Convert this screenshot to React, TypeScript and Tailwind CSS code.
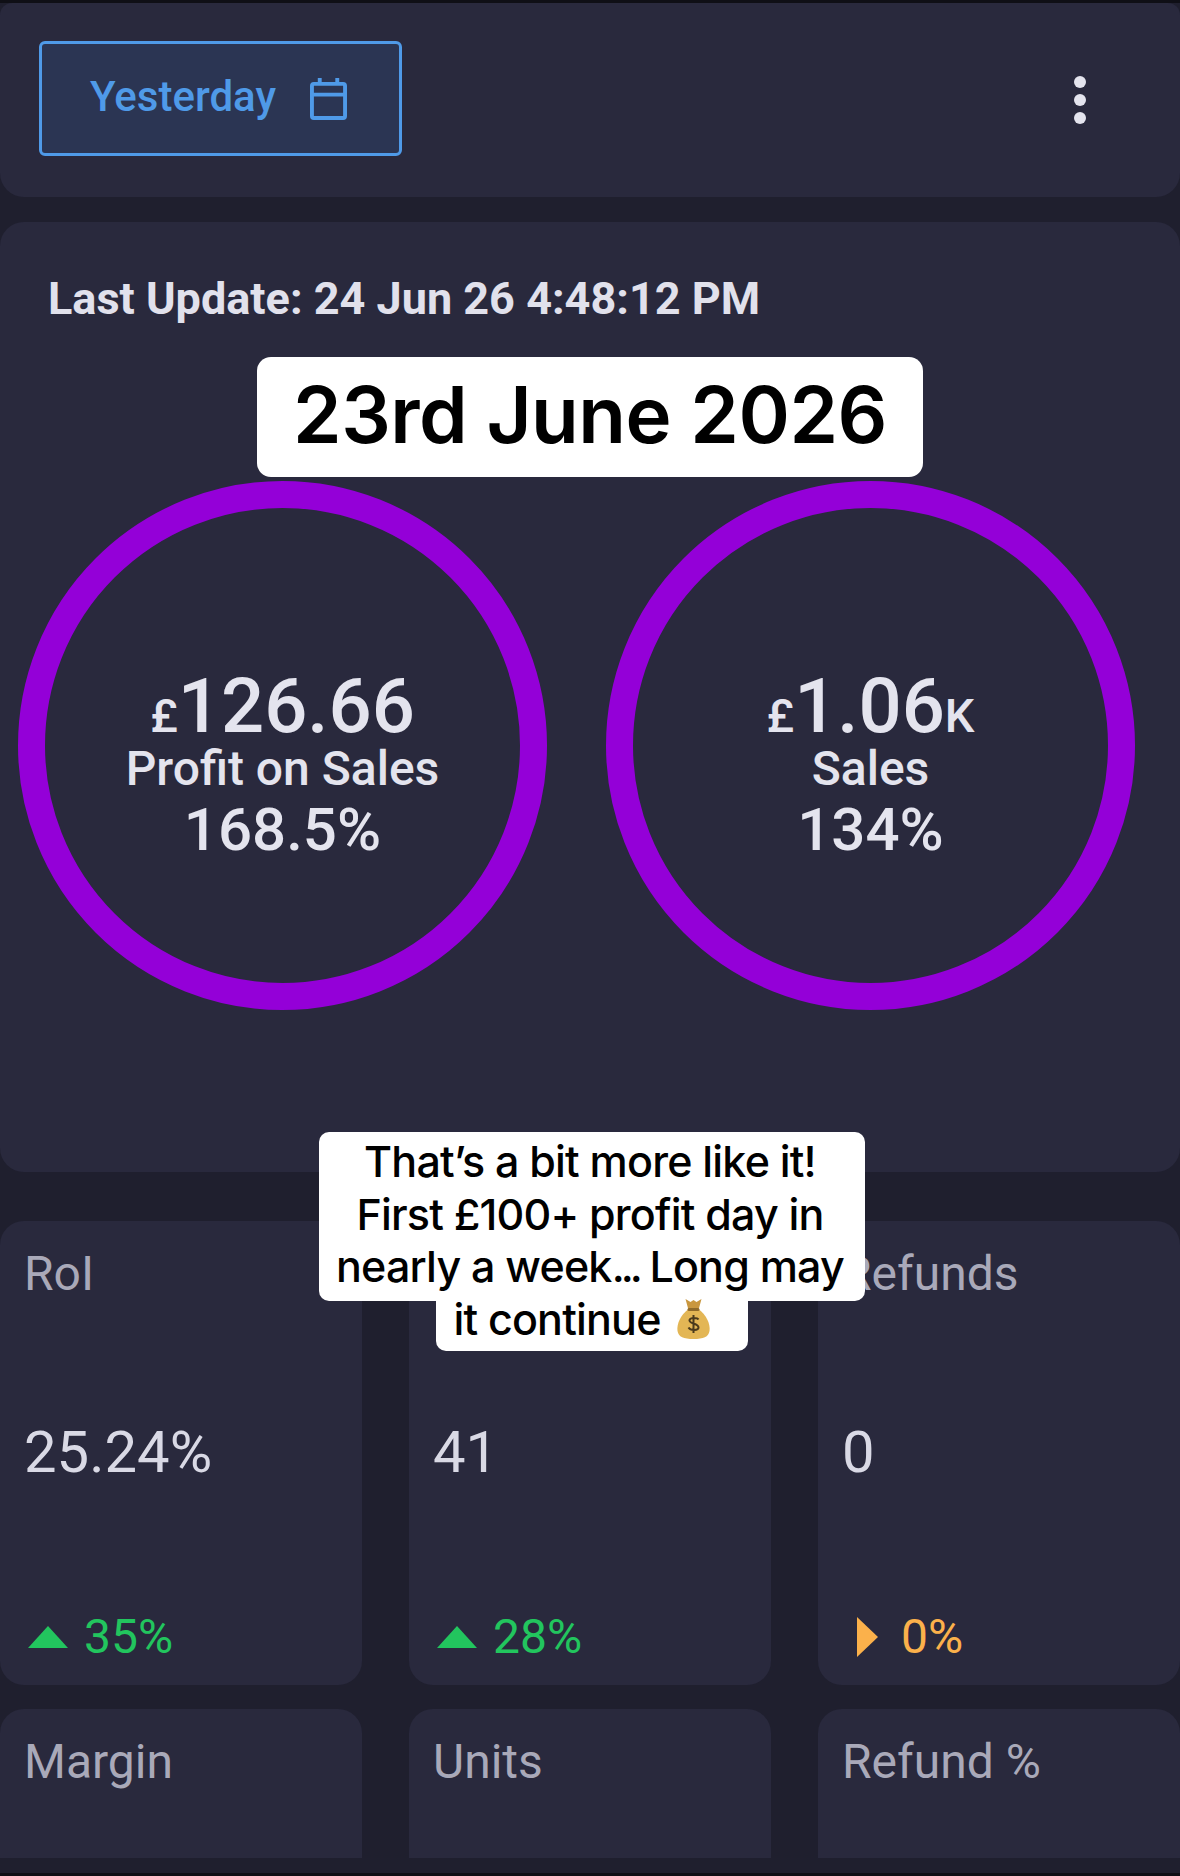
const roboto = "font-['Roboto',sans-serif]";

function CalendarIcon() {
  return (
    <svg className="ml-[1px]" width="37" height="42" viewBox="0 0 38 43" fill="none" stroke="#4f9ae8" strokeWidth="4" strokeLinejoin="round">
      <rect x="2" y="6" width="34" height="35" rx="2" />
      <path d="M2 17h34M10 0v6M28 0v6" />
    </svg>
  );
}

function MoneyBag() {
  return (
    <svg width="35" height="42" viewBox="0 0 34 42">
      <path d="M9 1l5 3 3-2 3 2 5-3-3 11H12z" fill="#c9973f" />
      <path d="M12 11h10c8 6 12 15 11 22-1 6-6 8-16 8S2 39 1 33c-1-7 3-16 11-22z" fill="#e3b655" />
      <rect x="11" y="10" width="12" height="3" rx="1.5" fill="#8f6a2a" />
      <path d="M22 21.5c-1-2-8-2.500-9 .5-1 4 9 3 9 7.500 0 3-8 3.500-10 0M17 17v18" fill="none" stroke="#4a3a1c" strokeWidth="2" />
    </svg>
  );
}

function Gauge({ value, unit, label, pct }: { value: string; unit?: string; label: string; pct: string }) {
  return (
    <div className="w-[529px] h-[529px] rounded-full border-[27px] border-[#9400d8] flex flex-col items-center pt-[161px] text-[#e4e4ee] font-medium">
      <div className="flex items-baseline h-[74px]">
        <span className="text-[47px] leading-none">£</span>
        <span className="text-[76px] leading-[74px]">{value}</span>
        {unit && <span className="text-[47px] leading-none">{unit}</span>}
      </div>
      <div className="text-[48px] leading-[52px]">{label}</div>
      <div className="text-[60px] leading-[70px]">{pct}</div>
    </div>
  );
}

function Trend({ dir, text }: { dir: "up" | "flat"; text: string }) {
  const up = dir === "up";
  return (
    <div className={`flex items-center text-[48px] leading-[54px] ${up ? "text-[#22c55e]" : "text-[#fbb14b]"}`}>
      {up ? (
        <svg className="ml-[28px] mr-[16px]" width="40" height="22" viewBox="0 0 40 22"><path d="M20 0l20 22H0z" fill="#22c55e" /></svg>
      ) : (
        <svg className="ml-[39px] mr-[23px]" width="21" height="40" viewBox="0 0 21 40"><path d="M0 0l21 20L0 40z" fill="#fbb14b" /></svg>
      )}
      {text}
    </div>
  );
}

function Stat({ label, value, dir, text }: { label?: string; value: string; dir: "up" | "flat"; text: string }) {
  return (
    <div className="h-[464px] bg-[#29293d] rounded-[24px] flex flex-col">
      <div className="h-[54px] mt-[26px] pl-[24px] text-[48px] leading-[54px] text-[#a9a9b9]">{label}</div>
      <div className="pl-[24px] mt-[118px] text-[58px] leading-[66px] text-[#d9d9e5]">{value}</div>
      <div className="mt-[125px]"><Trend dir={dir} text={text} /></div>
    </div>
  );
}

export default function App() {
  return (
    <div className={`relative w-[1180px] h-[1876px] overflow-hidden bg-[#1f1f2e] ${roboto}`}>
      <div className="pt-[3px]">
        <div className="h-[194px] bg-[#29293d] rounded-b-[24px] rounded-t-[12px] flex items-center justify-between pl-[39px] pr-[94px]">
          <button className="w-[363px] h-[115px] rounded-[6px] border-[3px] border-[#4f9ae8] bg-[#2b3553] flex items-center pl-[48px] gap-[33px] text-[42px] font-medium text-[#4f9ae8] mt-[-3px]">
            <span className="pb-[4px]">Yesterday</span>
            <CalendarIcon />
          </button>
          <div className="flex flex-col gap-[6px]">
            <span className="w-[12px] h-[12px] rounded-full bg-[#e4e4ee]" />
            <span className="w-[12px] h-[12px] rounded-full bg-[#e4e4ee]" />
            <span className="w-[12px] h-[12px] rounded-full bg-[#e4e4ee]" />
          </div>
        </div>

        <div className="mt-[25px] h-[950px] bg-[#29293d] rounded-[24px] px-[18px]">
          <div className="pl-[30px] pt-[50px] h-[259px] text-[45px] leading-[54px] font-bold text-[#e1e1ec]">
            Last Update: 24 Jun 26 4:48:12 PM
          </div>
          <div className="flex justify-between w-[1117px]">
            <Gauge value="126.66" label="Profit on Sales" pct="168.5%" />
            <Gauge value="1.06" unit="K" label="Sales" pct="134%" />
          </div>
        </div>

        <div className="mt-[49px] grid grid-cols-3 gap-x-[47px] gap-y-[24px]">
          <Stat label="RoI" value="25.24%" dir="up" text="35%" />
          <Stat value="41" dir="up" text="28%" />
          <Stat label="Refunds" value="0" dir="flat" text="0%" />
          {["Margin", "Units", "Refund %"].map((t) => (
            <div key={t} className="h-[149px] bg-[#29293d] rounded-t-[24px] pl-[24px] pt-[26px] text-[48px] leading-[54px] text-[#a9a9b9]">{t}</div>
          ))}
        </div>
      </div>

      <div className="absolute left-[257px] top-[357px] w-[666px] h-[120px] pb-[6px] bg-white rounded-[14px] flex items-center justify-center font-['Inter',sans-serif] font-semibold text-[78px] tracking-[-0.500px] text-black">
        23rd June 2026
      </div>

      <div className="absolute left-[319px] top-[1132px] w-[546px] font-['Inter',sans-serif] font-medium text-[43px] leading-[52.500px] tracking-[-0.800px] text-black text-center whitespace-nowrap">
        <div className="bg-white rounded-[10px] h-[169px] pt-[3px] pr-[4px]">
          That’s a bit more like it!<br />First £100+ profit day in<br />nearly a week<span className="tracking-[-4px]">...</span> Long may
        </div>
        <div className="bg-white rounded-b-[10px] w-[312px] h-[50px] ml-[117px] pb-[14px] pr-[20px] flex items-center justify-center gap-[15px]">
          it continue <MoneyBag />
        </div>
      </div>

      <div className="absolute inset-x-0 top-0 h-[3px] bg-[#0f0f16]" />
      <div className="absolute inset-x-0 bottom-0 h-[3px] bg-[#0f0f16]" />
    </div>
  );
}
